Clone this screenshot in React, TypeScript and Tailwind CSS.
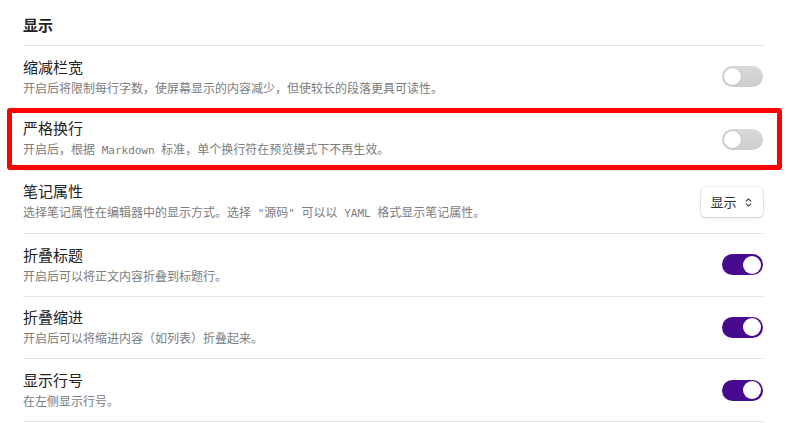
import React from 'react';
import { ChevronsUpDown } from 'lucide-react';

const cjk = '[font-family:"Noto_Sans_CJK_SC","Noto_Sans",sans-serif]';

const Mono = ({ children }: { children: React.ReactNode }) => (
  <span className='[font-family:"DejaVu_Sans_Mono","Noto_Sans_CJK_SC",monospace] text-[11px] whitespace-pre'>{children}</span>
);

const Toggle = ({ on }: { on: boolean }) =>
  on ? (
    <div className="flex h-[21px] w-[41px] items-center justify-end rounded-full bg-[#470b90] pr-[2px]">
      <div className="h-[18px] w-[18px] rounded-full bg-white" />
    </div>
  ) : (
    <div className="flex h-[21px] w-[41px] items-center rounded-full bg-gradient-to-b from-[#d9d9d9] to-[#cdcdcd] pl-[1px]">
      <div className="h-[19px] w-[19px] rounded-full border border-[#c4c4c4] bg-white" />
    </div>
  );

const Select = () => (
  <div className="flex h-[30px] w-[62px] items-center justify-center gap-[6px] rounded-[5px] bg-white text-[13px] text-[#333] shadow-[0_0_0_1px_rgba(0,0,0,0.06),0_1px_3px_rgba(0,0,0,0.15)]">
    <span>显示</span>
    <ChevronsUpDown className="h-[11px] w-[11px] text-[#444]" strokeWidth={2.5} />
  </div>
);

const App = () => {
  const rows: { title: string; desc: React.ReactNode; control: React.ReactNode; marked?: boolean }[] = [
    {
      title: '缩减栏宽',
      desc: '开启后将限制每行字数，使屏幕显示的内容减少，但使较长的段落更具可读性。',
      control: <Toggle on={false} />
    },
    {
      title: '严格换行',
      desc: (
        <>
          开启后，根据<Mono> Markdown </Mono>标准，单个换行符在预览模式下不再生效。
        </>
      ),
      control: <Toggle on={false} />,
      marked: true
    },
    {
      title: '笔记属性',
      desc: (
        <>
          选择笔记属性在编辑器中的显示方式。选择<Mono> "</Mono>源码<Mono>" </Mono>可以以<Mono> YAML </Mono>格式显示笔记属性。
        </>
      ),
      control: <Select />
    },
    {
      title: '折叠标题',
      desc: '开启后可以将正文内容折叠到标题行。',
      control: <Toggle on />
    },
    {
      title: '折叠缩进',
      desc: '开启后可以将缩进内容（如列表）折叠起来。',
      control: <Toggle on />
    },
    {
      title: '显示行号',
      desc: '在左侧显示行号。',
      control: <Toggle on />
    }
  ];

  return (
    <div className={`h-[423px] w-[790px] overflow-hidden bg-white pl-[23px] pr-[27px] ${cjk}`}>
      <div className="flex h-[46px] items-center border-b border-[#e3e3e3] pt-[6px] text-[15px] font-bold text-[#222]">
        显示
      </div>
      {rows.map((row, i) => (
        <div key={i} className="relative flex h-[62.67px] items-center justify-between border-b border-[#e3e3e3]">
          <div className="flex flex-col">
            <div className="text-[15px] leading-[20px] text-[#222]">{row.title}</div>
            <div className="mt-[2px] text-[12px] leading-[18px] text-[#7c7c7c]">{row.desc}</div>
          </div>
          {row.control}
          {row.marked && (
            <div className="pointer-events-none absolute -top-[1px] -left-[16px] -right-[19px] h-[62px] rounded-[3px] border-[5px] border-[#ff0000]" />
          )}
        </div>
      ))}
    </div>
  );
};

export default App;
